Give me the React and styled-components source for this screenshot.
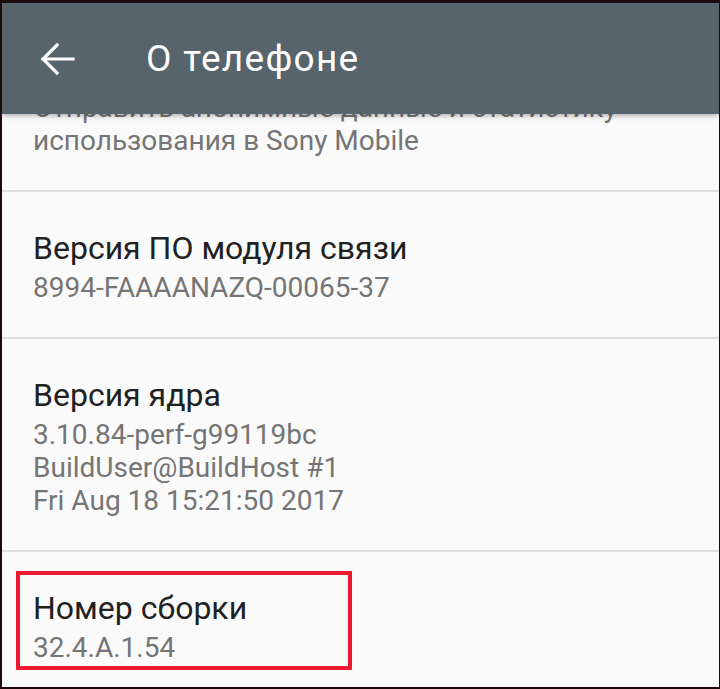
import React from "react";
import styled, { createGlobalStyle } from "styled-components";

const GlobalStyle = createGlobalStyle`
    html, body {
        margin: 0;
        padding: 0;
        background: #1c0a0b;
    }
    * {
        box-sizing: border-box;
    }
`;

const sections = [
    {
        id: "stats",
        lines: [
            "Отправить анонимные данные и статистику",
            "использования в Sony Mobile",
        ],
    },
    {
        id: "baseband",
        title: "Версия ПО модуля связи",
        lines: ["8994-FAAAANAZQ-00065-37"],
    },
    {
        id: "kernel",
        title: "Версия ядра",
        lines: [
            "3.10.84-perf-g99119bc",
            "BuildUser@BuildHost #1",
            "Fri Aug 18 15:21:50 2017",
        ],
    },
    {
        id: "build",
        title: "Номер сборки",
        lines: ["32.4.A.1.54"],
        highlighted: true,
    },
];

const BackArrow = () => (
    <svg width="36" height="34" viewBox="0 0 36 34" fill="none">
        <path
            d="M34 17H4M18 3L4 17l14 14"
            stroke="#fff"
            strokeWidth="3.2"
            strokeLinecap="square"
        />
    </svg>
);

const App = () => {
    return (
        <>
            <GlobalStyle />
            <Screen>
                <AppBar>
                    <BackButton aria-label="Назад">
                        <BackArrow />
                    </BackButton>
                    <Title>О телефоне</Title>
                </AppBar>
                <Body>
                    <List>
                        {sections.map((s) => (
                            <Item
                                key={s.id}
                                $highlighted={s.highlighted}
                                $headless={!s.title}
                            >
                                <ItemContent $highlighted={s.highlighted}>
                                    {s.title && <ItemTitle>{s.title}</ItemTitle>}
                                    <Summary>
                                        {s.lines.map((l) => (
                                            <div key={l}>{l}</div>
                                        ))}
                                    </Summary>
                                </ItemContent>
                            </Item>
                        ))}
                    </List>
                </Body>
            </Screen>
        </>
    );
};

const Screen = styled.div`
    width: 720px;
    height: 689px;
    display: flex;
    flex-direction: column;
    border-style: solid;
    border-color: #1c0a0b;
    border-width: 3px 1px 2px 2px;
    background: #fafafa;
    font-family: Roboto, "Liberation Sans", sans-serif;
    overflow: hidden;
`;

const AppBar = styled.header`
    position: relative;
    z-index: 2;
    flex: 0 0 111px;
    display: flex;
    align-items: center;
    padding-left: 37px;
    background: #57646c;
    box-shadow: 0 2px 5px rgba(0, 0, 0, 0.28);
`;

const BackButton = styled.div`
    display: flex;
    align-items: center;
    width: 107px;
    height: 40px;
`;

const Title = styled.h1`
    margin: 0;
    font-size: 37px;
    letter-spacing: 1.3px;
    font-weight: 400;
    color: #ffffff;
`;

const Body = styled.div`
    flex: 1;
    overflow: hidden;
`;

const List = styled.div`
    margin-top: -26px;
    display: flex;
    flex-direction: column;
`;

const Item = styled.div`
    padding: ${(p) =>
        p.$highlighted ? "19px 0 0 14px" : p.$headless ? "0 0 33px 31px" : "36px 0 33px 31px"};
    border-bottom: ${(p) => (p.$highlighted ? "none" : "2px solid #dedede")};
`;

const ItemContent = styled.div`
    ${(p) =>
        p.$highlighted &&
        `
        width: 336px;
        border: 4px solid #ec1c2e;
        padding: 13px 0 2px 13px;
    `}
`;

const ItemTitle = styled.div`
    font-size: 32px;
    line-height: 40px;
    color: #212121;
`;

const Summary = styled.div`
    margin-top: 3px;
    font-size: 28px;
    line-height: 33px;
    color: #757575;
`;

export default App;
